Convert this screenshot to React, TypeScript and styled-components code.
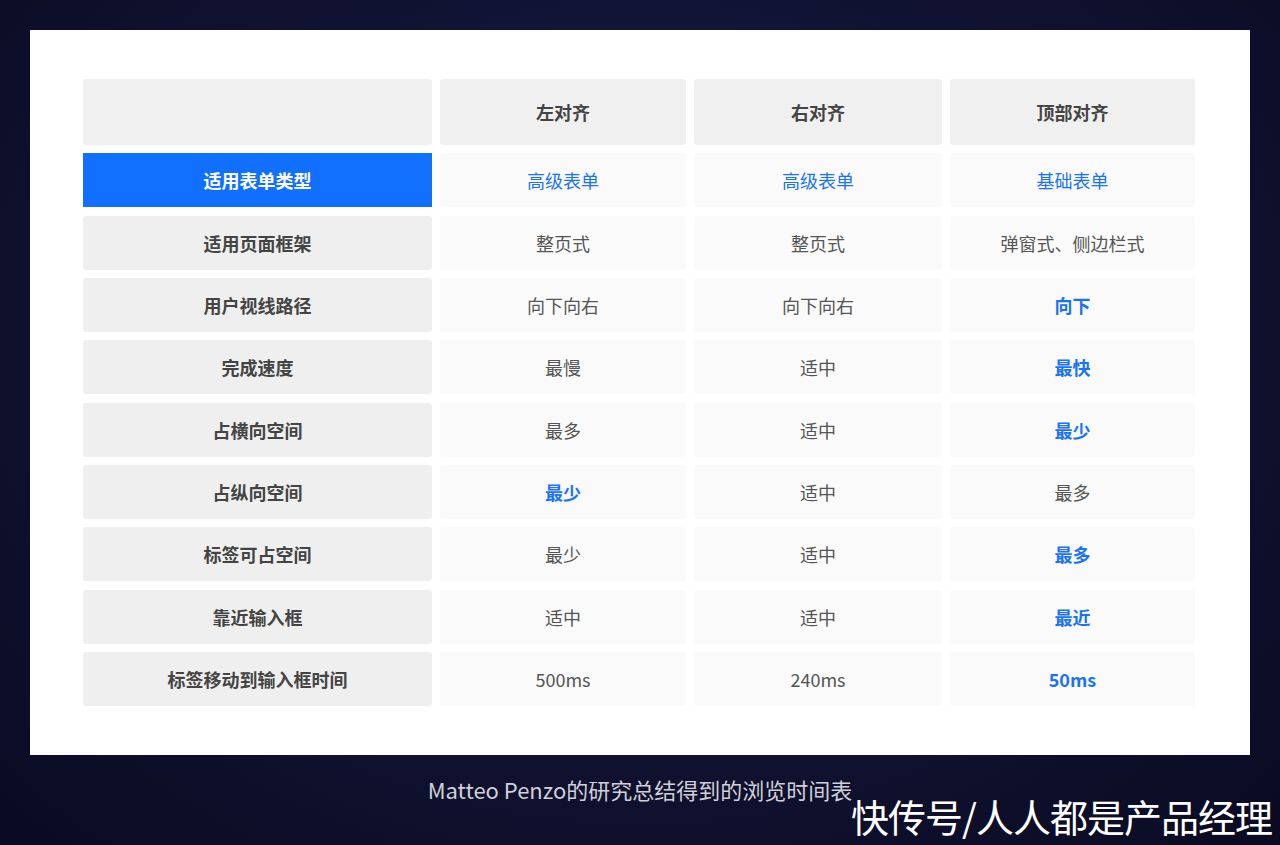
import React from "react";
import styled, { createGlobalStyle } from "styled-components";

const Global = createGlobalStyle`
  html, body { margin: 0; padding: 0; }
  body { width: 1280px; height: 845px; overflow: hidden; font-family: "Noto Sans CJK SC", "Noto Sans", sans-serif;
    background: radial-gradient(ellipse at 50% 40%, #1c1d4a 0%, #101231 55%, #0a0b22 100%); }
`;

const Page = styled.div`
  position: relative;
  width: 1280px;
  height: 845px;
  padding-top: 30px;
  box-sizing: border-box;
  display: flex;
  flex-direction: column;
  align-items: center;
`;

const Panel = styled.div`
  width: 1220px;
  height: 725px;
  background: #fff;
  box-sizing: border-box;
  padding: 49px 55px 0 53px;
`;

const Table = styled.div`
  display: grid;
  grid-template-columns: 349px 246px 248px 245px;
  grid-template-rows: 66px repeat(9, 54px);
  column-gap: 8px;
  row-gap: 8.33px;
`;

type Kind = "head" | "label" | "active" | "data";
const bg: Record<Kind, string> = { head: "#f0f0f0", label: "#efefef", active: "#1170ff", data: "#fafafa" };

const Cell = styled.div<{ $kind: Kind; $blue?: boolean; $bold?: boolean }>`
  background: ${(p) => bg[p.$kind]};
  border-radius: ${(p) => (p.$kind === "active" ? "0" : "3px")};
  display: flex;
  align-items: center;
  justify-content: center;
  font-size: 18px;
  font-weight: ${(p) => (p.$kind === "data" && !p.$bold ? 400 : 700)};
  color: ${(p) => (p.$kind === "active" ? "#fff" : p.$blue ? "#1a73f5" : p.$kind === "data" ? "#555" : "#444")};
`;

const Caption = styled.div`
  margin-top: 18px;
  font-size: 22px;
  color: #d0d0d8;
`;

const Watermark = styled.div`
  position: absolute;
  right: 8px;
  bottom: 2px;
  font-size: 38px;
  color: #fff;
  letter-spacing: -1px;
`;

type D = [string, boolean?, boolean?];
const rows: { label: string; cells: D[]; active?: boolean }[] = [
  { label: "适用表单类型", active: true, cells: [["高级表单", true], ["高级表单", true], ["基础表单", true]] },
  { label: "适用页面框架", cells: [["整页式"], ["整页式"], ["弹窗式、侧边栏式"]] },
  { label: "用户视线路径", cells: [["向下向右"], ["向下向右"], ["向下", true, true]] },
  { label: "完成速度", cells: [["最慢"], ["适中"], ["最快", true, true]] },
  { label: "占横向空间", cells: [["最多"], ["适中"], ["最少", true, true]] },
  { label: "占纵向空间", cells: [["最少", true, true], ["适中"], ["最多"]] },
  { label: "标签可占空间", cells: [["最少"], ["适中"], ["最多", true, true]] },
  { label: "靠近输入框", cells: [["适中"], ["适中"], ["最近", true, true]] },
  { label: "标签移动到输入框时间", cells: [["500ms"], ["240ms"], ["50ms", true, true]] },
];

export default function App() {
  return (
    <>
      <Global />
      <Page>
        <Panel>
          <Table>
            <Cell $kind="head" />
            <Cell $kind="head">左对齐</Cell>
            <Cell $kind="head">右对齐</Cell>
            <Cell $kind="head">顶部对齐</Cell>
            {rows.map((r) => (
              <React.Fragment key={r.label}>
                <Cell $kind={r.active ? "active" : "label"}>{r.label}</Cell>
                {r.cells.map(([t, blue, bold], i) => (
                  <Cell key={i} $kind="data" $blue={blue} $bold={bold}>{t}</Cell>
                ))}
              </React.Fragment>
            ))}
          </Table>
        </Panel>
        <Caption>Matteo Penzo的研究总结得到的浏览时间表</Caption>
        <Watermark>快传号/人人都是产品经理</Watermark>
      </Page>
    </>
  );
}
